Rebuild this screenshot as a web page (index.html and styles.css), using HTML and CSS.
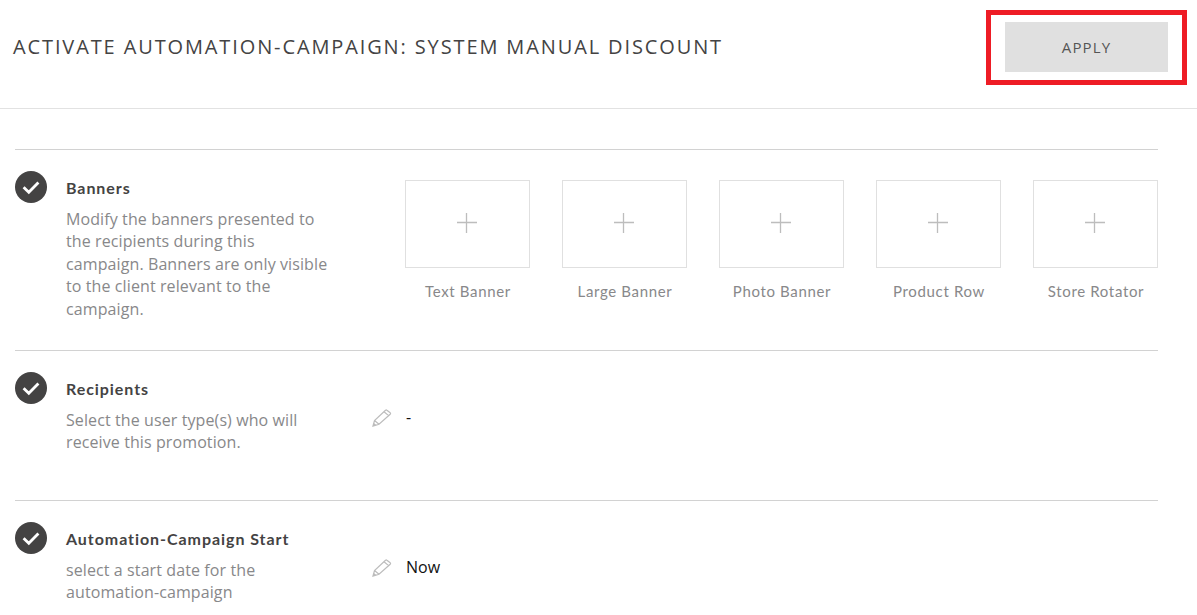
FILE: index.html
```html
<!DOCTYPE html>
<html lang="en">
<head>
<meta charset="utf-8">
<title>Activate Automation-Campaign</title>
<link rel="stylesheet" href="styles.css">
</head>
<body>
<svg class="defs" width="0" height="0" aria-hidden="true">
  <symbol id="check" viewBox="0 0 32 32">
    <circle cx="16" cy="16" r="16" fill="#444343"/>
    <path d="M8.6 16.2l5.2 5 9.6-9.8" fill="none" stroke="#fff" stroke-width="2.8"/>
  </symbol>
  <symbol id="plus" viewBox="0 0 20 20">
    <path d="M0 9.5h20M9.5 0v20" fill="none" stroke="#bdbdbd" stroke-width="1.3"/>
  </symbol>
  <symbol id="pencil" viewBox="0 0 20 18">
    <path d="M1 17l1.5-5.5L13.5 1.2a1 1 0 0 1 1.4 0l3.3 2.6a1 1 0 0 1 0 1.4L7 15.2zM2.5 11.5l4.5 3.7M12 2.8l4.6 3.8" fill="none" stroke="#bcbcbc" stroke-width="1.2"/>
    <path d="M1 17l.8-3 2.6 2z" fill="#bcbcbc"/>
  </symbol>
</svg>
<header class="topbar">
  <h1 class="page-title">ACTIVATE AUTOMATION-CAMPAIGN: SYSTEM MANUAL DISCOUNT</h1>
  <div class="highlight"><button class="apply" type="button">APPLY</button></div>
</header>
<main class="content">
  <section class="row row-banners">
    <svg class="status"><use href="#check"/></svg>
    <div class="info">
      <h2>Banners</h2>
      <p>Modify the banners presented to the recipients during this campaign. Banners are only visible to the client relevant to the campaign.</p>
    </div>
    <div class="banners">
      <div class="banner"><div class="tile"><svg class="plus"><use href="#plus"/></svg></div><span>Text Banner</span></div>
      <div class="banner"><div class="tile"><svg class="plus"><use href="#plus"/></svg></div><span>Large Banner</span></div>
      <div class="banner"><div class="tile"><svg class="plus"><use href="#plus"/></svg></div><span>Photo Banner</span></div>
      <div class="banner"><div class="tile"><svg class="plus"><use href="#plus"/></svg></div><span>Product Row</span></div>
      <div class="banner"><div class="tile"><svg class="plus"><use href="#plus"/></svg></div><span>Store Rotator</span></div>
    </div>
  </section>
  <section class="row row-plain">
    <svg class="status"><use href="#check"/></svg>
    <div class="info">
      <h2>Recipients</h2>
      <p>Select the user type(s) who will receive this promotion.</p>
    </div>
    <div class="value"><svg class="pencil"><use href="#pencil"/></svg><span>-</span></div>
  </section>
  <section class="row row-plain">
    <svg class="status"><use href="#check"/></svg>
    <div class="info">
      <h2>Automation-Campaign Start</h2>
      <p>select a start date for the automation-campaign</p>
    </div>
    <div class="value"><svg class="pencil"><use href="#pencil"/></svg><span>Now</span></div>
  </section>
</main>
</body>
</html>
```
FILE: styles.css
```css
* { box-sizing: border-box; }
html, body { margin: 0; height: 615px; overflow: hidden; background: #fff; }
body { font-family: "Open Sans", "Liberation Sans", sans-serif; color: #444343; }
.defs { display: block; height: 0; }

.topbar {
  height: 109px;
  display: flex;
  justify-content: space-between;
  align-items: flex-start;
  padding: 10px 10px 0 13px;
  border-bottom: 1px solid #e2e2e2;
}
.page-title {
  margin: 24px 0 0;
  font-size: 20px;
  line-height: 26px;
  font-weight: 400;
  letter-spacing: 1.88px;
  color: #444343;
  white-space: nowrap;
}
.highlight {
  border: 5px solid #ee1c25;
  padding: 7px 14px 8px;
  width: 201px;
  height: 75px;
}
.apply {
  display: block;
  width: 163px;
  height: 50px;
  border: 0;
  padding: 0;
  background: #e0e0e0;
  color: #555;
  font: 400 15px "Open Sans", sans-serif;
  letter-spacing: 1.15px;
}

.content { padding: 40px 39px 0 15px; }
.row {
  display: flex;
  align-items: flex-start;
  border-top: 1px solid #d2d2d2;
  padding-top: 21px;
}
.row-banners { height: 201px; }
.row-plain { height: 150px; }
.status { width: 32px; height: 32px; flex: none; }
.info { width: 264px; margin-left: 19px; margin-top: 7px; flex: none; }
.info h2 {
  margin: 0;
  font-family: "Lato", "Open Sans", sans-serif;
  font-size: 16px;
  line-height: 20px;
  font-weight: 700;
  letter-spacing: .94px;
  color: #444343;
}
.info p {
  margin: 9.6px 0 0;
  font-size: 16px;
  line-height: 22.5px;
  letter-spacing: .1px;
  color: #88888a;
}

.banners { display: flex; gap: 32px; margin-left: 75px; margin-top: 9px; }
.banner { width: 125px; display: flex; flex-direction: column; align-items: center; }
.tile {
  width: 125px;
  height: 88px;
  border: 1px solid #e0e0e0;
  display: flex;
  align-items: center;
  justify-content: center;
}
.plus { width: 20px; height: 20px; margin-left: -2px; margin-top: -2px; }
.banner span {
  margin: 12px 0 0 1px;
  font-family: "Lato", sans-serif;
  font-size: 15px;
  line-height: 22px;
  letter-spacing: .65px;
  color: #88888a;
}

.value { display: flex; align-items: center; margin-left: 42px; margin-top: 35px; color: #111; }
.pencil { width: 20px; height: 18px; flex: none; }
.value span { margin-left: 14px; font-size: 16px; line-height: 22px; position: relative; top: -1px; }
```
